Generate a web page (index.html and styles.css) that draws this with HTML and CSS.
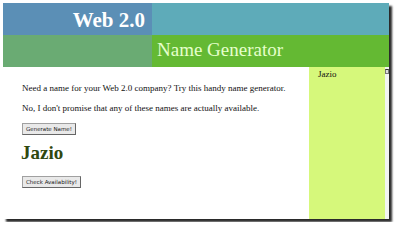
FILE: index.html
```html
<!DOCTYPE html>
<html lang="en">
<head>
    <meta charset="UTF-8">
    <title>Web 2.0 Name Generator</title>
    <link rel="stylesheet" href="styles.css">
</head>
<body>
    <div class="window">
        <!-- Header -->
        <div class="header">
            <div class="logo">Web 2.0</div>
            <div class="logo-fill"></div>
            <div class="sub-fill"></div>
            <div class="subtitle">Name Generator</div>
        </div>

        <div class="main">
            <div class="content">
                <p>Need a name for your Web 2.0 company? Try this handy name generator.</p>
                <p>No, I don't promise that any of these names are actually available.</p>
                <button class="btn">Generate Name!</button>
                <h1 class="name">Jazio</h1>
                <button class="btn">Check Availability!</button>
            </div>
            <div class="sidebar">
                <div class="history-item">Jazio</div>
            </div>
            <div class="scrollbar">
                <div class="scroll-up"></div>
            </div>
        </div>
    </div>
</body>
</html>
```

FILE: styles.css
```css
* {
    margin: 0;
    padding: 0;
    box-sizing: border-box;
}

body {
    background: white;
    padding: 3px;
    font-family: "Liberation Serif", "Times New Roman", serif;
    color: #111;
}

.window {
    width: 386px;
    height: 216px;
    background: white;
    box-shadow: 3px 3px 2px #2a2a2a;
    display: flex;
    flex-direction: column;
}

/* Header */
.header {
    display: grid;
    grid-template-columns: 149px 1fr;
    grid-template-rows: 32px 32px;
}

.logo {
    background: #5b8fb6;
    color: white;
    font-weight: bold;
    font-size: 21px;
    text-align: right;
    padding-right: 7px;
    line-height: 34px;
}

.logo-fill {
    background: #5eabb9;
}

.sub-fill {
    background: #6aab73;
}

.subtitle {
    background: #64b933;
    color: #e6ffcc;
    font-size: 19px;
    padding-left: 5px;
    line-height: 29px;
}

/* Main */
.main {
    flex: 1;
    display: flex;
}

.content {
    flex: 1;
    padding: 16px 0 0 19px;
}

.content p {
    font-size: 9px;
    line-height: 11px;
    margin-bottom: 9px;
}

.btn {
    font-family: "DejaVu Sans", sans-serif;
    font-size: 5.5px;
    color: #222;
    background: #e9e9e9;
    border: 1px solid #a0a0a0;
    border-bottom-color: #666;
    border-right-color: #666;
    padding: 2px 3px;
    display: block;
}

.name {
    font-size: 19px;
    line-height: 22px;
    color: #30480f;
    margin: 7px 0 12px -1px;
}

.sidebar {
    width: 76px;
    background: #d6f87b;
    padding: 2px 0 0 9px;
}

.history-item {
    font-size: 9px;
}

.scrollbar {
    width: 4px;
    background: #f2f4f2;
}

.scroll-up {
    height: 5px;
    margin-top: 2px;
    border: 1px solid #777;
    background: #ddd;
    border-top-color: #333;
}
```
